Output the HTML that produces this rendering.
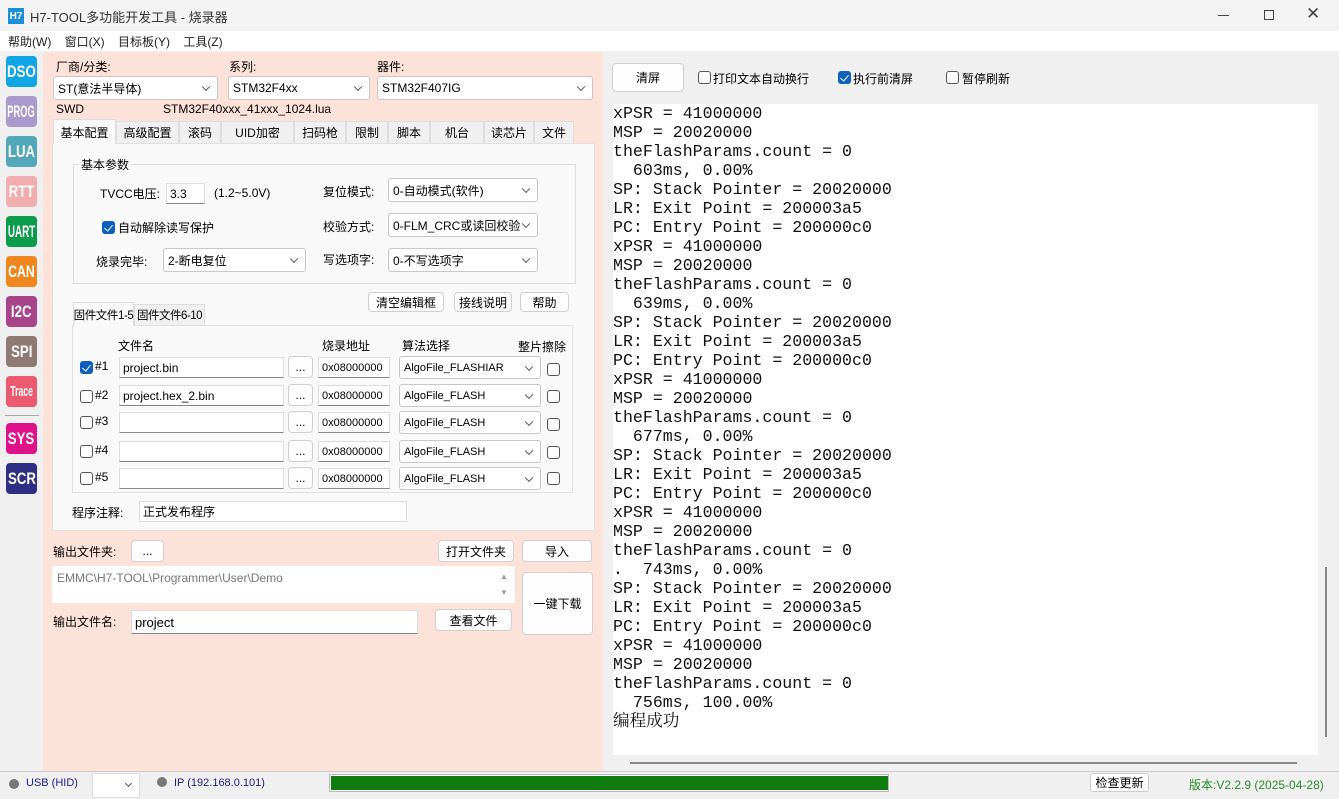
<!DOCTYPE html>
<html><head><meta charset="utf-8">
<style>
*{box-sizing:border-box;margin:0;padding:0}
body{width:1339px;height:799px;overflow:hidden;background:#f0f0f0;font-family:"Liberation Sans","Noto Sans CJK SC",sans-serif;font-size:12px;color:#000;position:relative;white-space:nowrap}
.a{position:absolute}
.ic{position:absolute;left:6px;width:31px;height:31px;border-radius:4px;color:#fff;font-weight:bold;display:flex;align-items:center;justify-content:center;font-size:17px;font-family:"Liberation Sans",sans-serif}
.ic span{display:inline-block;transform:scaleX(0.78)}
.sel{position:absolute;background:#fff;border:1px solid #c8c8c8;border-radius:3px;padding-left:4px;display:flex;align-items:center;font-size:12px}
.sel:after{content:"";position:absolute;right:8px;top:50%;width:5px;height:5px;border-right:1px solid #555;border-bottom:1px solid #555;transform:translateY(-70%) rotate(45deg)}
.inp{position:absolute;background:#fff;border:1px solid #ddd;border-bottom:1px solid #888;padding-left:3px;display:flex;align-items:center;font-size:12px}
.btn{position:absolute;background:#fdfdfd;border:1px solid #d0d0d0;border-radius:4px;display:flex;align-items:center;justify-content:center;font-size:12px}
.cb{position:absolute;width:13px;height:13px;border:1px solid #555;border-radius:3px;background:#fff}
.cb.on{background:#0f5fc0;border-color:#0f5fc0}
.cb.on:after{content:"";position:absolute;left:3px;top:1px;width:4px;height:7px;border-right:1.5px solid #fff;border-bottom:1.5px solid #fff;transform:rotate(40deg)}
.tab{position:absolute;top:121px;height:22px;border:1px solid #ddd;border-bottom:none;background:#f0f0f0;display:flex;align-items:center;justify-content:center;font-size:12px}
.log{position:absolute;left:613px;top:104px;width:705px;height:651px;background:#fff;font-family:"Liberation Mono","Noto Serif CJK SC",monospace;font-size:16.6px;line-height:19px;white-space:pre;color:#111}
</style></head><body>
<div class="a" style="left:0;top:0;width:1339px;height:31px;background:#f3f3f3"></div>
<div class="a" style="left:8px;top:8px;width:16px;height:16px;background:#1a8fd8;color:#fff;font-size:10px;font-weight:bold;display:flex;align-items:center;justify-content:center">H7</div>
<div class="a" style="left:30px;top:7px;font-size:13px;color:#333">H7-TOOL多功能开发工具 - 烧录器</div>
<div class="a" style="left:1218px;top:15px;width:11px;height:1px;background:#444"></div>
<div class="a" style="left:1264px;top:10px;width:10px;height:10px;border:1px solid #444"></div>
<div class="a" style="left:1306px;top:4px;font-size:17px;color:#444">✕</div>
<div class="a" style="left:0;top:31px;width:1339px;height:20px;background:#fff"></div>
<div class="a" style="left:8px;top:33px;font-size:12px;color:#222;word-spacing:10px">帮助(W) 窗口(X) 目标板(Y) 工具(Z)</div>
<div class="ic" style="top:56px;background:#10a6e6"><span>DSO</span></div>
<div class="ic" style="top:96px;background:#a89acc"><span style="transform:scaleX(0.55)">PROG</span></div>
<div class="ic" style="top:136px;background:#52a8b8"><span>LUA</span></div>
<div class="ic" style="top:176px;background:#f2aeae"><span>RTT</span></div>
<div class="ic" style="top:216px;background:#0b9b4c"><span style="transform:scaleX(0.58)">UART</span></div>
<div class="ic" style="top:256px;background:#f0871e"><span style="transform:scaleX(0.72)">CAN</span></div>
<div class="ic" style="top:296px;background:#a9448a"><span>I2C</span></div>
<div class="ic" style="top:336px;background:#8e7a73"><span>SPI</span></div>
<div class="ic" style="top:376px;background:#ec5a70;font-size:15px"><span style="transform:scaleX(0.58)">Trace</span></div>
<div class="a" style="left:5px;top:415px;width:34px;height:1px;background:#aaa"></div>
<div class="ic" style="top:423px;background:#e0128a"><span>SYS</span></div>
<div class="ic" style="top:463px;background:#2d2f84"><span>SCR</span></div>
<div class="a" style="left:43px;top:52px;width:560px;height:719px;background:#fde2da"></div>
<div class="a" style="left:56px;top:58px">厂商/分类:</div>
<div class="a" style="left:229px;top:58px">系列:</div>
<div class="a" style="left:377px;top:58px">器件:</div>
<div class="sel" style="left:53px;top:76px;width:165px;height:24px">ST(意法半导体)</div>
<div class="sel" style="left:228px;top:76px;width:142px;height:24px">STM32F4xx</div>
<div class="sel" style="left:377px;top:76px;width:216px;height:24px">STM32F407IG</div>
<div class="a" style="left:56px;top:102px">SWD</div>
<div class="a" style="left:163px;top:102px">STM32F40xxx_41xxx_1024.lua</div>
<div class="a" style="left:52px;top:143px;width:543px;height:388px;background:#f9f9f9;border:1px solid #e0e0e0"></div>
<div class="tab" style="left:53px;width:63px;background:#f9f9f9;top:119px;height:25px;z-index:2">基本配置</div>
<div class="tab" style="left:116px;width:63px">高级配置</div>
<div class="tab" style="left:179px;width:42px">滚码</div>
<div class="tab" style="left:221px;width:73px">UID加密</div>
<div class="tab" style="left:294px;width:52px">扫码枪</div>
<div class="tab" style="left:346px;width:42px">限制</div>
<div class="tab" style="left:388px;width:42px">脚本</div>
<div class="tab" style="left:430px;width:54px">机台</div>
<div class="tab" style="left:484px;width:50px">读芯片</div>
<div class="tab" style="left:534px;width:40px">文件</div>
<div class="a" style="left:73px;top:164px;width:503px;height:120px;border:1px solid #dcdcdc"></div>
<div class="a" style="left:79px;top:156px;background:#f9f9f9;padding:0 2px">基本参数</div>
<div class="a" style="left:100px;top:185px">TVCC电压:</div>
<div class="inp" style="left:166px;top:183px;width:39px;height:21px">3.3</div>
<div class="a" style="left:214px;top:186px">(1.2~5.0V)</div>
<div class="cb on" style="left:102px;top:221px"></div>
<div class="a" style="left:118px;top:219px">自动解除读写保护</div>
<div class="a" style="left:96px;top:253px">烧录完毕:</div>
<div class="sel" style="left:163px;top:248px;width:143px;height:24px">2-断电复位</div>
<div class="a" style="left:323px;top:183px">复位模式:</div>
<div class="a" style="left:323px;top:218px">校验方式:</div>
<div class="a" style="left:323px;top:251px">写选项字:</div>
<div class="sel" style="left:388px;top:178px;width:150px;height:24px">0-自动模式(软件)</div>
<div class="sel" style="left:388px;top:213px;width:150px;height:24px">0-FLM_CRC或读回校验</div>
<div class="sel" style="left:388px;top:248px;width:150px;height:24px">0-不写选项字</div>
<div class="btn" style="left:368px;top:292px;width:76px;height:20px">清空编辑框</div>
<div class="btn" style="left:454px;top:292px;width:58px;height:20px">接线说明</div>
<div class="btn" style="left:520px;top:292px;width:49px;height:20px">帮助</div>
<div class="a" style="left:72px;top:325px;width:501px;height:168px;border:1px solid #e0e0e0;background:#f9f9f9"></div>
<div class="a" style="left:73px;top:302px;width:61px;height:24px;border:1px solid #ddd;border-bottom:none;background:#f9f9f9;display:flex;align-items:center;justify-content:center;z-index:2;font-size:11.5px;letter-spacing:-0.4px">固件文件1-5</div>
<div class="a" style="left:134px;top:304px;width:71px;height:21px;border:1px solid #ddd;border-bottom:none;background:#f0f0f0;display:flex;align-items:center;justify-content:center;font-size:11.5px;letter-spacing:-0.5px">固件文件6-10</div>
<div class="a" style="left:118px;top:337px">文件名</div>
<div class="a" style="left:322px;top:337px">烧录地址</div>
<div class="a" style="left:402px;top:337px">算法选择</div>
<div class="a" style="left:518px;top:338px">整片擦除</div>

<div class="cb on" style="left:80px;top:361px"></div><div class="a" style="left:95px;top:359px">#1</div>
<div class="inp" style="left:119px;top:357px;width:165px;height:21px">project.bin</div>
<div class="btn" style="left:288px;top:356px;width:25px;height:22px">...</div>
<div class="inp" style="left:318px;top:357px;width:72px;height:21px;font-size:11px">0x08000000</div>
<div class="sel" style="left:399px;top:356px;width:142px;height:23px;font-size:11px">AlgoFile_FLASHIAR</div>
<div class="cb" style="left:547px;top:363px"></div>

<div class="cb" style="left:80px;top:390px"></div><div class="a" style="left:95px;top:388px">#2</div>
<div class="inp" style="left:119px;top:385px;width:165px;height:21px">project.hex_2.bin</div>
<div class="btn" style="left:288px;top:384px;width:25px;height:22px">...</div>
<div class="inp" style="left:318px;top:385px;width:72px;height:21px;font-size:11px">0x08000000</div>
<div class="sel" style="left:399px;top:384px;width:142px;height:23px;font-size:11px">AlgoFile_FLASH</div>
<div class="cb" style="left:547px;top:390px"></div>

<div class="cb" style="left:80px;top:416px"></div><div class="a" style="left:95px;top:414px">#3</div>
<div class="inp" style="left:119px;top:412px;width:165px;height:21px"></div>
<div class="btn" style="left:288px;top:411px;width:25px;height:22px">...</div>
<div class="inp" style="left:318px;top:412px;width:72px;height:21px;font-size:11px">0x08000000</div>
<div class="sel" style="left:399px;top:411px;width:142px;height:23px;font-size:11px">AlgoFile_FLASH</div>
<div class="cb" style="left:547px;top:418px"></div>

<div class="cb" style="left:80px;top:445px"></div><div class="a" style="left:95px;top:443px">#4</div>
<div class="inp" style="left:119px;top:441px;width:165px;height:21px"></div>
<div class="btn" style="left:288px;top:440px;width:25px;height:22px">...</div>
<div class="inp" style="left:318px;top:441px;width:72px;height:21px;font-size:11px">0x08000000</div>
<div class="sel" style="left:399px;top:440px;width:142px;height:23px;font-size:11px">AlgoFile_FLASH</div>
<div class="cb" style="left:547px;top:446px"></div>

<div class="cb" style="left:80px;top:472px"></div><div class="a" style="left:95px;top:470px">#5</div>
<div class="inp" style="left:119px;top:468px;width:165px;height:21px"></div>
<div class="btn" style="left:288px;top:467px;width:25px;height:22px">...</div>
<div class="inp" style="left:318px;top:468px;width:72px;height:21px;font-size:11px">0x08000000</div>
<div class="sel" style="left:399px;top:467px;width:142px;height:23px;font-size:11px">AlgoFile_FLASH</div>
<div class="cb" style="left:547px;top:472px"></div>

<div class="a" style="left:72px;top:504px">程序注释:</div>
<div class="inp" style="left:139px;top:501px;width:268px;height:21px;border-bottom-color:#ddd">正式发布程序</div>
<div class="a" style="left:53px;top:543px">输出文件夹:</div>
<div class="btn" style="left:131px;top:540px;width:33px;height:22px">...</div>
<div class="btn" style="left:438px;top:540px;width:76px;height:22px">打开文件夹</div>
<div class="btn" style="left:522px;top:540px;width:70px;height:22px">导入</div>
<div class="a" style="left:52px;top:566px;width:463px;height:37px;background:#fff"></div>
<div class="a" style="left:57px;top:571px;color:#777">EMMC\H7-TOOL\Programmer\User\Demo</div>
<div class="a" style="left:500px;top:572px;font-size:8px;color:#999">▲</div>
<div class="a" style="left:500px;top:588px;font-size:8px;color:#999">▼</div>
<div class="btn" style="left:522px;top:572px;width:71px;height:63px">一键下载</div>
<div class="a" style="left:53px;top:613px">输出文件名:</div>
<div class="inp" style="left:131px;top:610px;width:287px;height:24px;font-size:13px">project</div>
<div class="btn" style="left:435px;top:609px;width:77px;height:22px">查看文件</div>
<div class="btn" style="left:612px;top:63px;width:72px;height:29px">清屏</div>
<div class="cb" style="left:698px;top:71px"></div><div class="a" style="left:713px;top:70px">打印文本自动换行</div>
<div class="cb on" style="left:838px;top:71px"></div><div class="a" style="left:853px;top:70px">执行前清屏</div>
<div class="cb" style="left:946px;top:71px"></div><div class="a" style="left:962px;top:70px">暂停刷新</div>
<div class="log">xPSR = 41000000
MSP = 20020000
theFlashParams.count = 0
  603ms, 0.00%
SP: Stack Pointer = 20020000
LR: Exit Point = 200003a5
PC: Entry Point = 200000c0
xPSR = 41000000
MSP = 20020000
theFlashParams.count = 0
  639ms, 0.00%
SP: Stack Pointer = 20020000
LR: Exit Point = 200003a5
PC: Entry Point = 200000c0
xPSR = 41000000
MSP = 20020000
theFlashParams.count = 0
  677ms, 0.00%
SP: Stack Pointer = 20020000
LR: Exit Point = 200003a5
PC: Entry Point = 200000c0
xPSR = 41000000
MSP = 20020000
theFlashParams.count = 0
.  743ms, 0.00%
SP: Stack Pointer = 20020000
LR: Exit Point = 200003a5
PC: Entry Point = 200000c0
xPSR = 41000000
MSP = 20020000
theFlashParams.count = 0
  756ms, 100.00%
编程成功</div>
<div class="a" style="left:1325px;top:567px;width:2px;height:170px;background:#888"></div>
<div class="a" style="left:630px;top:762px;width:667px;height:2px;background:#888"></div>
<div class="a" style="left:0;top:771px;width:1339px;height:28px;background:#f0f0f0;border-top:1px solid #ccc"></div>
<div class="a" style="left:9px;top:779px;width:10px;height:10px;border-radius:50%;background:#777"></div>
<div class="a" style="left:26px;top:777px;font-size:11px;color:#1a1a8a">USB (HID)</div>
<div class="a" style="left:92px;top:773px;width:48px;height:25px;background:#fff;border:1px solid #ddd"></div>
<div class="a" style="left:126px;top:781px;width:5px;height:5px;border-right:1px solid #555;border-bottom:1px solid #555;transform:rotate(45deg)"></div>
<div class="a" style="left:157px;top:777px;width:10px;height:10px;border-radius:50%;background:#777"></div>
<div class="a" style="left:174px;top:777px;font-size:11px;color:#1a1a8a">IP (192.168.0.101)</div>
<div class="a" style="left:329px;top:774px;width:560px;height:18px;background:#fff;border:1px solid #bbb"></div>
<div class="a" style="left:331px;top:776px;width:557px;height:14px;background:#107c10"></div>
<div class="a" style="left:1090px;top:773px;width:59px;height:19px;border:1px solid #ccc;border-radius:3px;background:#fff;display:flex;align-items:center;justify-content:center">检查更新</div>
<div class="a" style="left:1189px;top:776px;color:#2a8a2a">版本:V2.2.9 (2025-04-28)</div>
</body></html>
